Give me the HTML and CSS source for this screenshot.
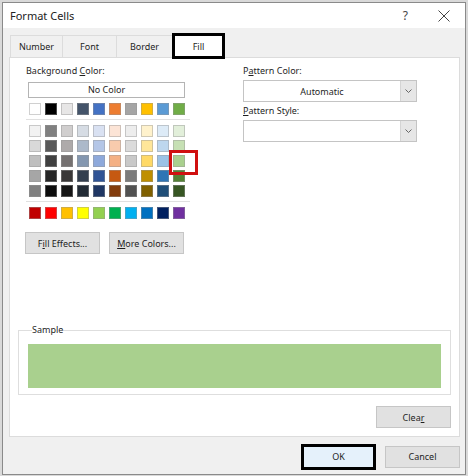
FILE: index.html
```html
<!DOCTYPE html>
<html>
<head>
<meta charset="utf-8">
<link rel="stylesheet" href="styles.css">
</head>
<body>
<div class="dialog">
  <div class="titlebar">
    <span class="title">Format Cells</span>
    <span class="help">?</span>
    <svg class="close" width="12" height="12" viewBox="0 0 12 12"><path d="M0.5 0.5 L11.5 11.5 M11.5 0.5 L0.5 11.5" stroke="#444" stroke-width="1" fill="none"/></svg>
  </div>
  <div class="tabs">
    <div class="tab t-number">Number</div>
    <div class="tab t-font">Font</div>
    <div class="tab t-border">Border</div>
    <div class="tab active">Fill</div>
  </div>
  <div class="panel">
    <div class="top">
      <div class="left">
        <div class="label">Background <u>C</u>olor:</div>
        <div class="nocolor">No Color</div>
        <div class="swrow first">
          <span class="sw" style="background:#FFFFFF"></span><span class="sw" style="background:#000000"></span><span class="sw" style="background:#E7E6E6"></span><span class="sw" style="background:#44546A"></span><span class="sw" style="background:#4472C4"></span><span class="sw" style="background:#ED7D31"></span><span class="sw" style="background:#A5A5A5"></span><span class="sw" style="background:#FFC000"></span><span class="sw" style="background:#5B9BD5"></span><span class="sw" style="background:#70AD47"></span>
        </div>
        <div class="sep"></div>
        <div class="grid">
          <span class="sw" style="background:#F2F2F2"></span><span class="sw" style="background:#808080"></span><span class="sw" style="background:#D0CECE"></span><span class="sw" style="background:#D6DCE4"></span><span class="sw" style="background:#D9E1F2"></span><span class="sw" style="background:#FCE4D6"></span><span class="sw" style="background:#EDEDED"></span><span class="sw" style="background:#FFF2CC"></span><span class="sw" style="background:#DDEBF7"></span><span class="sw" style="background:#E2EFDA"></span>
          <span class="sw" style="background:#D9D9D9"></span><span class="sw" style="background:#595959"></span><span class="sw" style="background:#AEAAAA"></span><span class="sw" style="background:#ACB9CA"></span><span class="sw" style="background:#B4C6E7"></span><span class="sw" style="background:#F8CBAD"></span><span class="sw" style="background:#DBDBDB"></span><span class="sw" style="background:#FFE699"></span><span class="sw" style="background:#BDD7EE"></span><span class="sw" style="background:#C6E0B4"></span>
          <span class="sw" style="background:#BFBFBF"></span><span class="sw" style="background:#404040"></span><span class="sw" style="background:#757171"></span><span class="sw" style="background:#8497B0"></span><span class="sw" style="background:#8EA9DB"></span><span class="sw" style="background:#F4B084"></span><span class="sw" style="background:#C9C9C9"></span><span class="sw" style="background:#FFD966"></span><span class="sw" style="background:#9BC2E6"></span><span class="sw selected" style="background:#A9D08E"></span>
          <span class="sw" style="background:#A6A6A6"></span><span class="sw" style="background:#262626"></span><span class="sw" style="background:#3A3838"></span><span class="sw" style="background:#333F4F"></span><span class="sw" style="background:#305496"></span><span class="sw" style="background:#C65911"></span><span class="sw" style="background:#7B7B7B"></span><span class="sw" style="background:#BF8F00"></span><span class="sw" style="background:#2F75B5"></span><span class="sw" style="background:#548235"></span>
          <span class="sw" style="background:#808080"></span><span class="sw" style="background:#0D0D0D"></span><span class="sw" style="background:#161616"></span><span class="sw" style="background:#222B35"></span><span class="sw" style="background:#203764"></span><span class="sw" style="background:#833C0C"></span><span class="sw" style="background:#525252"></span><span class="sw" style="background:#806000"></span><span class="sw" style="background:#1F4E78"></span><span class="sw" style="background:#375623"></span>
        </div>
        <div class="sep"></div>
        <div class="swrow">
          <span class="sw" style="background:#C00000"></span><span class="sw" style="background:#FF0000"></span><span class="sw" style="background:#FFC000"></span><span class="sw" style="background:#FFFF00"></span><span class="sw" style="background:#92D050"></span><span class="sw" style="background:#00B050"></span><span class="sw" style="background:#00B0F0"></span><span class="sw" style="background:#0070C0"></span><span class="sw" style="background:#002060"></span><span class="sw" style="background:#7030A0"></span>
        </div>
        <div class="btnrow">
          <div class="btn">F<u>i</u>ll Effects...</div>
          <div class="btn"><u>M</u>ore Colors...</div>
        </div>
      </div>
      <div class="right">
        <div class="label">P<u>a</u>ttern Color:</div>
        <div class="combo">
          <div class="val">Automatic</div>
          <div class="arrow"><svg width="7" height="4" viewBox="0 0 7 4"><path d="M0.5 0.5 L3.5 3.5 L6.5 0.5" stroke="#666" stroke-width="1" fill="none"/></svg></div>
        </div>
        <div class="label second"><u>P</u>attern Style:</div>
        <div class="combo">
          <div class="val"></div>
          <div class="arrow"><svg width="7" height="4" viewBox="0 0 7 4"><path d="M0.5 0.5 L3.5 3.5 L6.5 0.5" stroke="#666" stroke-width="1" fill="none"/></svg></div>
        </div>
      </div>
    </div>
    <fieldset class="sample">
      <legend>Sample</legend>
      <div class="fill"></div>
    </fieldset>
    <div class="btn clear">Clea<u>r</u></div>
  </div>
  <div class="footer">
    <div class="btn ok">OK</div>
    <div class="btn">Cancel</div>
  </div>
</div>
</body>
</html>
```
FILE: styles.css
```css
* { box-sizing: border-box; }
body {
  margin: 0;
  width: 468px;
  height: 476px;
  overflow: hidden;
  background: #d9d9d9;
  font-family: "Noto Sans", "Open Sans", sans-serif;
  font-size: 9px;
  color: #1e1e1e;
}
u { text-decoration-thickness: 1px; text-underline-offset: 1px; }
.dialog {
  margin: 2px 2px 0 2px;
  height: 473px;
  border: 1px solid #8a8a8a;
  background: #f0f0f0;
  display: flex;
  flex-direction: column;
}
.titlebar {
  height: 25px;
  background: #fff;
  display: flex;
  align-items: center;
  padding: 0 15px 0 7px;
}
.title { font-size: 11px; flex: 1; color: #222; }
.help { font-size: 12px; color: #444; margin-right: 30px; }
.tabs {
  height: 29px;
  display: flex;
  align-items: flex-end;
  padding-left: 7px;
}
.tab {
  height: 22px;
  display: flex;
  align-items: center;
  justify-content: center;
  border: 1px solid #dcdcdc;
  border-bottom: none;
  margin-right: -1px;
  background: #f0f0f0;
}
.t-number { width: 53px; }
.t-font { width: 55px; }
.t-border { width: 57px; }
.tab.active {
  width: 53px;
  height: 26px;
  border: 3px solid #000;
  background: #fff;
  margin-bottom: -2px;
  position: relative;
  z-index: 1;
}
.panel {
  height: 380px;
  margin: 0 5px 0 6px;
  background: #fff;
  border: 1px solid #dcdcdc;
  display: flex;
  flex-direction: column;
  padding: 6px 8px 8px 16px;
}
.top { display: flex; }
.left { width: 217px; }
.right { width: 174px; }
.label { height: 14px; line-height: 14px; }
.nocolor {
  margin: 4px 0 0 2px;
  width: 157px;
  height: 16px;
  border: 1px solid #b4b4b4;
  text-align: center;
  line-height: 14px;
  background: #fff;
}
.swrow { display: flex; gap: 4px; margin-left: 3px; }
.swrow.first { margin-top: 5px; }
.grid {
  display: grid;
  grid-template-columns: repeat(10, 12px);
  column-gap: 4px;
  row-gap: 3px;
  margin-left: 3px;
}
.sw {
  display: block;
  width: 12px;
  height: 12px;
  border: 1px solid rgba(150, 150, 150, 0.45);
}
.sw.selected { position: relative; }
.sw.selected::after {
  content: "";
  position: absolute;
  left: -5px;
  top: -6px;
  width: 23px;
  height: 19px;
  border: 3px solid #d01010;
}
.sep {
  height: 1px;
  background: #e0e0e0;
  width: 164px;
  margin: 4px 0 5px 0;
}
.btnrow { display: flex; gap: 9px; margin: 13px 0 0 -1px; }
.btn {
  width: 75px;
  height: 22px;
  background: #e1e1e1;
  border: 1px solid #c6c6c6;
  display: flex;
  align-items: center;
  justify-content: center;
}
.combo {
  margin-top: 2px;
  height: 22px;
  display: flex;
  border: 1px solid #c4c4c4;
  background: #fff;
}
.combo .val { flex: 1; display: flex; align-items: center; justify-content: center; }
.combo .arrow {
  width: 16px;
  background: #e6e6e6;
  border-left: 1px solid #d4d4d4;
  display: flex;
  align-items: center;
  justify-content: center;
}
.label.second { margin-top: 2px; }
.sample {
  margin: 69px 0 0 -8px;
  padding: 7px 9px 6px 9px;
  border: 1px solid #dedede;
  min-width: 0;
}
.sample legend {
  padding: 0;
  margin-left: 4px;
  line-height: 14px;
  height: 14px;
}
.fill { height: 44px; background: #a9d08e; }
.clear { align-self: flex-end; margin-top: 11px; }
.footer {
  flex: 1;
  display: flex;
  justify-content: flex-end;
  align-items: center;
  gap: 9px;
  padding: 2px 5px 0 0;
}
.btn.ok {
  height: 26px;
  border: 3px solid #000;
  background: #e5f1fb;
}
```
